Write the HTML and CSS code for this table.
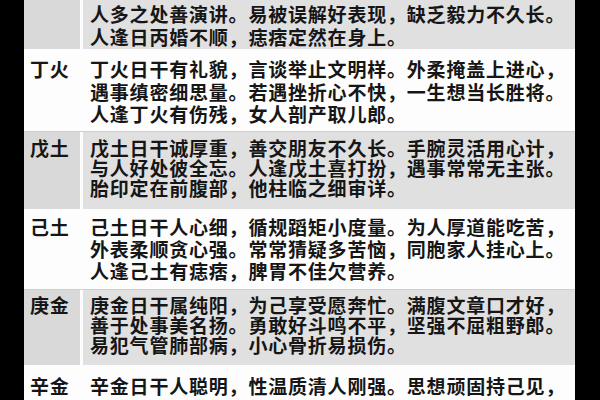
FILE: index.html
```html
<!DOCTYPE html>
<html lang="zh">
<head>
<meta charset="utf-8">
<title>十天干日主</title>
<link rel="stylesheet" href="styles.css">
</head>
<body>
<div class="page">
  <div class="table">
    <div class="row shade r1">
      <div class="label"></div>
      <p class="text">人多之处善演讲。易被误解好表现，缺乏毅力不久长。<br>人逢日丙婚不顺，痣痞定然在身上。</p>
    </div>
    <div class="row plain r2">
      <div class="label">丁火</div>
      <p class="text">丁火日干有礼貌，言谈举止文明样。外柔掩盖上进心，<br>遇事缜密细思量。若遇挫折心不快，一生想当长胜将。<br>人逢丁火有伤残，女人剖产取儿郎。</p>
    </div>
    <div class="row shade r3">
      <div class="label">戊土</div>
      <p class="text">戊土日干诚厚重，善交朋友不久长。手腕灵活用心计，<br>与人好处彼全忘。人逢戊土喜打扮，遇事常常无主张。<br>胎印定在前腹部，他柱临之细审详。</p>
    </div>
    <div class="row plain r4">
      <div class="label">己土</div>
      <p class="text">己土日干人心细，循规蹈矩小度量。为人厚道能吃苦，<br>外表柔顺贪心强。常常猜疑多苦恼，同胞家人挂心上。<br>人逢己土有痣痞，脾胃不佳欠营养。</p>
    </div>
    <div class="row shade r5">
      <div class="label">庚金</div>
      <p class="text">庚金日干属纯阳，为己享受愿奔忙。满腹文章口才好，<br>善于处事美名扬。勇敢好斗鸣不平，坚强不屈粗野郎。<br>易犯气管肺部病，小心骨折易损伤。</p>
    </div>
    <div class="row plain r6">
      <div class="label">辛金</div>
      <p class="text">辛金日干人聪明，性温质清人刚强。思想顽固持己见，</p>
    </div>
  </div>
</div>
</body>
</html>
```

FILE: styles.css
```css
html, body {
  margin: 0;
  padding: 0;
  background: #000;
}

.page {
  width: 600px;
  height: 400px;
  overflow: hidden;
  background: #000;
  display: flex;
  padding-left: 24px;
  box-sizing: border-box;
}

.table {
  width: 551px;
  display: flex;
  flex-direction: column;
  background: #fdfdfd;
  font-family: "Noto Sans CJK SC", "Noto Sans", sans-serif;
  font-weight: 700;
  font-size: 19px;
  letter-spacing: 0.8px;
  color: #161616;
}

.row {
  display: grid;
  grid-template-columns: 56px 1fr;
  column-gap: 3px;
  flex: none;
}

.label {
  padding-left: 6px;
  white-space: nowrap;
}

.text {
  margin: 0;
  padding-left: 7px;
  white-space: nowrap;
}

.shade .label {
  background: #d9d9d9;
}

.shade .text {
  background: #e0e0e0;
}

.plain {
  background: #fdfdfd;
  border-bottom: 1px solid #cfcfcf;
}

.r1 { line-height: 22.5px; }
.r1 .label, .r1 .text { padding-top: 3px; padding-bottom: 1px; }

.r2 { line-height: 22.5px; }
.r2 .label, .r2 .text { padding-top: 9px; padding-bottom: 5px; }

.r3 { line-height: 20px; }
.r3 .label, .r3 .text { padding-top: 6px; padding-bottom: 11px; }

.r4 { line-height: 22px; }
.r4 .label, .r4 .text { padding-top: 7px; padding-bottom: 7px; }

.r5 { line-height: 20px; }
.r5 .label, .r5 .text { padding-top: 5px; padding-bottom: 10px; }

.r6 { line-height: 22px; }
.r6 .label, .r6 .text { padding-top: 10px; padding-bottom: 4px; }
```
